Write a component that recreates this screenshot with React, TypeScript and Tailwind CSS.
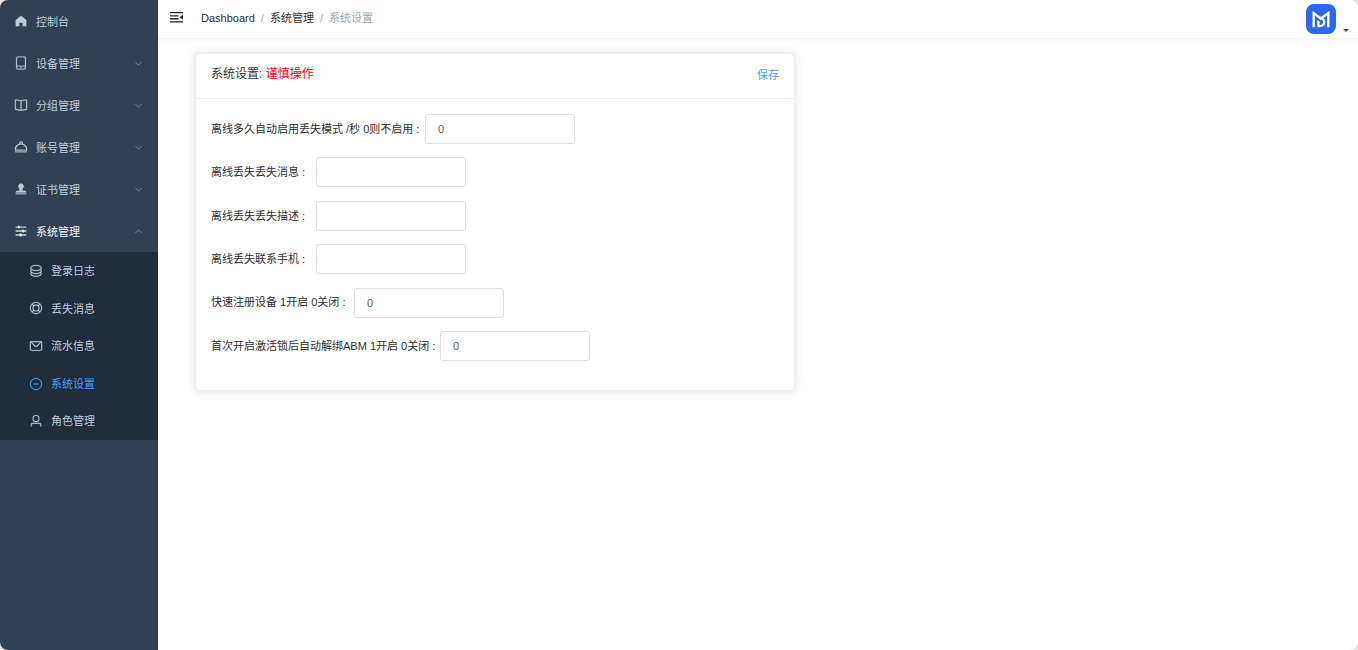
import { useState } from "react";
import clsx from "clsx";

const ICONS = {
  home: "M512 128 128 447.936V896h255.936V640H640v256h255.936V447.936z",
  phone:
    "M224 768v96.064a64 64 0 0 0 64 64h448a64 64 0 0 0 64-64V768zm0-64h576V160a64 64 0 0 0-64-64H288a64 64 0 0 0-64 64zm32 288a96 96 0 0 1-96-96V128a96 96 0 0 1 96-96h512a96 96 0 0 1 96 96v768a96 96 0 0 1-96 96zm304-144a48 48 0 1 1-96 0 48 48 0 0 1 96 0",
  book: "m512 863.36 384-54.848v-638.72L525.568 222.72a96 96 0 0 1-27.136 0L128 169.792v638.72zM137.024 106.432l370.432 52.928a32 32 0 0 0 9.088 0l370.432-52.928A64 64 0 0 1 960 169.792v638.72a64 64 0 0 1-54.976 63.36l-388.48 55.488a32 32 0 0 1-9.088 0l-388.48-55.488A64 64 0 0 1 64 808.512v-638.72a64 64 0 0 1 73.024-63.36M480 192h64v704h-64z",
  dish: "m384.064 274.56.064-50.688A128 128 0 0 1 512.128 96c70.528 0 127.68 57.152 127.68 127.68v50.752A448.19 448.19 0 0 1 955.392 768H68.544A448.19 448.19 0 0 1 384 274.56zM96 832h832a32 32 0 1 1 0 64H96a32 32 0 1 1 0-64m32-128h768a384 384 0 1 0-768 0m447.808-448v-32.32a63.68 63.68 0 0 0-63.68-63.68 64 64 0 0 0-64 63.936V256z",
  stamp:
    "M624 475.968V640h144a128 128 0 0 1 128 128H128a128 128 0 0 1 128-128h144V475.968a192 192 0 1 1 224 0M128 896v-64h768v64z",
  operation:
    "M389.44 768a96.064 96.064 0 0 1 181.12 0H896v64H570.56a96.064 96.064 0 0 1-181.12 0H128v-64zm192-288a96.064 96.064 0 0 1 181.12 0H896v64H762.56a96.064 96.064 0 0 1-181.12 0H128v-64zm-320-288a96.064 96.064 0 0 1 181.12 0H896v64H442.56a96.064 96.064 0 0 1-181.12 0H128v-64z",
  coin: "m161.92 580.736 29.888 58.88C171.328 659.776 160 681.728 160 704c0 82.304 155.328 160 352 160s352-77.696 352-160c0-22.272-11.392-44.16-31.808-64.32l30.464-58.432C903.936 615.808 928 657.664 928 704c0 129.728-188.544 224-416 224S96 833.728 96 704c0-46.592 24.32-88.576 65.92-123.264zM161.92 388.736l29.888 58.88C171.328 467.84 160 489.792 160 512c0 82.304 155.328 160 352 160s352-77.696 352-160c0-22.272-11.392-44.16-31.808-64.32l30.464-58.432C903.936 423.808 928 465.664 928 512c0 129.728-188.544 224-416 224S96 641.728 96 512c0-46.592 24.32-88.576 65.92-123.264zM512 512c-227.456 0-416-94.272-416-224S284.544 64 512 64s416 94.272 416 224-188.544 224-416 224m0-64c196.672 0 352-77.696 352-160S708.672 128 512 128s-352 77.696-352 160 155.328 160 352 160",
  help: "M512 960a448 448 0 1 1 0-896 448 448 0 0 1 0 896m0-64a384 384 0 1 0 0-768 384 384 0 0 0 0 768M512 768a256 256 0 1 1 0-512 256 256 0 0 1 0 512m0-64a192 192 0 1 0 0-384 192 192 0 0 0 0 384M218 263l45-45 113 113-45 45zM761 218l45 45-113 113-45-45zM806 761l-45 45-113-113 45-45zM263 806l-45-45 113-113 45 45z",
  message:
    "M128 224v512a64 64 0 0 0 64 64h640a64 64 0 0 0 64-64V224zm0-64h768a64 64 0 0 1 64 64v512a128 128 0 0 1-128 128H192A128 128 0 0 1 64 736V224a64 64 0 0 1 64-64M904 224 656.512 506.88a192 192 0 0 1-289.024 0L120 224zm-698.944 0 210.56 240.704a128 128 0 0 0 192.704 0L818.944 224z",
  remove:
    "M352 480h320a32 32 0 1 1 0 64H352a32 32 0 0 1 0-64M512 896a384 384 0 1 0 0-768 384 384 0 0 0 0 768m0 64a448 448 0 1 1 0-896 448 448 0 0 1 0 896",
  user: "M512 512a192 192 0 1 0 0-384 192 192 0 0 0 0 384m0 64a256 256 0 1 1 0-512 256 256 0 0 1 0 512m320 320v-96a96 96 0 0 0-96-96H288a96 96 0 0 0-96 96v96a32 32 0 1 1-64 0v-96a160 160 0 0 1 160-160h448a160 160 0 0 1 160 160v96a32 32 0 1 1-64 0",
  arrow:
    "M831.872 340.864 512 652.672 192.128 340.864a30.592 30.592 0 0 0-42.752 0 29.12 29.12 0 0 0 0 41.6L489.664 714.24a32 32 0 0 0 44.672 0l340.288-331.712a29.12 29.12 0 0 0 0-41.728 30.592 30.592 0 0 0-42.752 0z",
};

type IconName = keyof typeof ICONS;

function Icon({ name, className }: { name: IconName; className?: string }) {
  return (
    <svg
      viewBox="0 0 1024 1024"
      fill="currentColor"
      stroke="currentColor"
      strokeWidth="16"
      aria-hidden="true"
      className={clsx("shrink-0", className)}
    >
      <path d={ICONS[name]} />
    </svg>
  );
}

const menus: { icon: IconName; label: string }[] = [
  { icon: "phone", label: "设备管理" },
  { icon: "book", label: "分组管理" },
  { icon: "dish", label: "账号管理" },
  { icon: "stamp", label: "证书管理" },
];

const systemItems: { icon: IconName; label: string }[] = [
  { icon: "coin", label: "登录日志" },
  { icon: "help", label: "丢失消息" },
  { icon: "message", label: "流水信息" },
  { icon: "remove", label: "系统设置" },
  { icon: "user", label: "角色管理" },
];

const fields = [
  { id: "lost-after", label: "离线多久自动启用丢失模式 /秒 0则不启用 :", width: "w-[214px]", value: "0" },
  { id: "lost-message", label: "离线丢失丢失消息 :", width: "w-[105px]", value: "" },
  { id: "lost-desc", label: "离线丢失丢失描述 :", width: "w-[105px]", value: "" },
  { id: "lost-phone", label: "离线丢失联系手机 :", width: "w-[105px]", value: "" },
  { id: "quick-register", label: "快速注册设备 1开启 0关闭 :", width: "w-[143px]", value: "0" },
  { id: "unbind-abm", label: "首次开启激活锁后自动解绑ABM 1开启 0关闭 :", width: "w-[229px]", value: "0" },
];

function Sidebar() {
  const [open, setOpen] = useState(true);

  return (
    <nav className="w-[158px] shrink-0 bg-[#304156] text-[11px] text-[#bfcbd9]">
      <a href="#home" className="flex h-[42px] items-center gap-2 pl-[14px]">
        <Icon name="home" className="size-[14px]" />
        <span className="pt-[2px]">控制台</span>
      </a>
      {menus.map((m) => (
        <button key={m.label} type="button" className="flex h-[42px] w-full items-center gap-2 pl-[14px] pr-[15px]">
          <Icon name={m.icon} className="size-[14px]" />
          <span className="pt-[2px]">{m.label}</span>
          <Icon name="arrow" className="ml-auto size-[9px] text-[#8592a3]" />
        </button>
      ))}
      <button
        type="button"
        onClick={() => setOpen(!open)}
        className="flex h-[42px] w-full items-center gap-2 pl-[14px] pr-[15px] text-[#f4f4f5]"
      >
        <Icon name="operation" className="size-[14px]" />
        <span className="pt-[2px]">系统管理</span>
        <Icon name="arrow" className={clsx("ml-auto size-[9px] text-[#8592a3]", open && "rotate-180")} />
      </button>
      {open && (
        <div className="grid h-[188px] grid-rows-5 bg-[#1f2d3d]">
          {systemItems.map((item) => (
            <a
              key={item.label}
              href="#system"
              className={clsx("flex items-center gap-2 pl-[29px]", item.label === "系统设置" && "text-[#409eff]")}
            >
              <Icon name={item.icon} className="size-[14px]" />
              <span className="pt-px">{item.label}</span>
            </a>
          ))}
        </div>
      )}
    </nav>
  );
}

function Header() {
  return (
    <header className="flex h-[39px] items-center border-b border-[#f3f4f6] bg-white pl-3 pr-2 shadow-[0_1px_3px_rgba(0,21,41,0.04)]">
      <button type="button" aria-label="收起菜单" className="mb-1 text-[#222]">
        <svg viewBox="0 0 14 12" fill="currentColor" className="h-3 w-[14px]">
          <path d="M0 1h13v1.3H0zM0 4.2h8.5v1.3H0zM0 7.1h8.5v1.3H0zM0 10.3h13v1.3H0zM13 3.8v5L9.6 6.3z" />
        </svg>
      </button>
      <nav className="mb-px ml-[17px] flex items-center gap-[6px] text-[11px] text-[#303133]">
        <a href="#dashboard">Dashboard</a>
        <span className="text-[#a8abb2]">/</span>
        <a href="#system">系统管理</a>
        <span className="text-[#a8abb2]">/</span>
        <span className="text-[#97a8be]">系统设置</span>
      </nav>
      <button type="button" aria-label="用户菜单" className="ml-auto flex items-end gap-[6px]">
        <svg viewBox="0 0 30 30" className="size-[30px]">
          <rect width="30" height="30" rx="8" fill="#2b68ee" />
          <path
            d="M6.5 23.3V6.7l8.3 6.4 8.7-6.4v16.6h-2.4V11.4l-6.3 4.8-5.9-4.7v11.8z"
            fill="#fff"
          />
          <path
            d="M11.3 15.9l2.3 1.7v3.5c2.3 0 3.4-1.3 3.4-3 0-1-.4-1.8-1.2-2.4l1.8-1.5c1.1 1 1.7 2.3 1.7 3.9 0 3.1-2.3 5.2-5.9 5.2h-2.1z"
            fill="#fff"
          />
        </svg>
        <svg viewBox="0 0 8 8" fill="#444" className="size-2 shrink-0">
          <path d="M1 3h6L4 6z" />
        </svg>
      </button>
    </header>
  );
}

function SettingsCard() {
  const [values, setValues] = useState(fields.map((f) => f.value));

  return (
    <form
      onSubmit={(e) => e.preventDefault()}
      className="w-full max-w-[600px] rounded border border-[#ebeef5] bg-white shadow-[0_0_9px_rgba(0,0,0,0.12)]"
    >
      <div className="flex h-[45px] items-start justify-between border-b border-[#ebeef5] px-[15px] pt-[11px]">
        <h1 className="text-[12px] leading-[18px] text-[#303133]">
          系统设置<span className="text-[#f00]">: 谨慎操作</span>
        </h1>
        <button type="submit" className="pt-px text-[11px] leading-[18px] text-[#409eff]">
          保存
        </button>
      </div>
      <div className="px-[15px] pb-[29px] pt-[15px]">
        <div className="flex h-[247px] flex-col justify-between">
          {fields.map((f, i) => (
            <div key={f.id} className="flex items-center">
              <label htmlFor={f.id} className={clsx("shrink-0 whitespace-nowrap text-[11px] text-[#303133]", f.width)}>
                {f.label}
              </label>
              <input
                id={f.id}
                type="text"
                value={values[i]}
                onChange={(e) => setValues(values.map((v, j) => (j === i ? e.target.value : v)))}
                className="h-[30px] w-[150px] rounded-[3px] border border-[#dcdfe6] bg-white px-3 text-[11px] text-[#606266] outline-none focus:border-[#409eff]"
              />
            </div>
          ))}
        </div>
      </div>
    </form>
  );
}

export default function App() {
  return (
    <div className="min-h-screen bg-[#e4e4e4] font-['Liberation_Sans','Noto_Sans_CJK_SC',sans-serif]">
      <div className="flex min-h-screen overflow-hidden rounded-lg bg-white">
        <Sidebar />
        <div className="min-w-0 flex-1">
          <Header />
          <main className="pl-[37px] pr-4 pt-[14px]">
            <SettingsCard />
          </main>
        </div>
      </div>
    </div>
  );
}
